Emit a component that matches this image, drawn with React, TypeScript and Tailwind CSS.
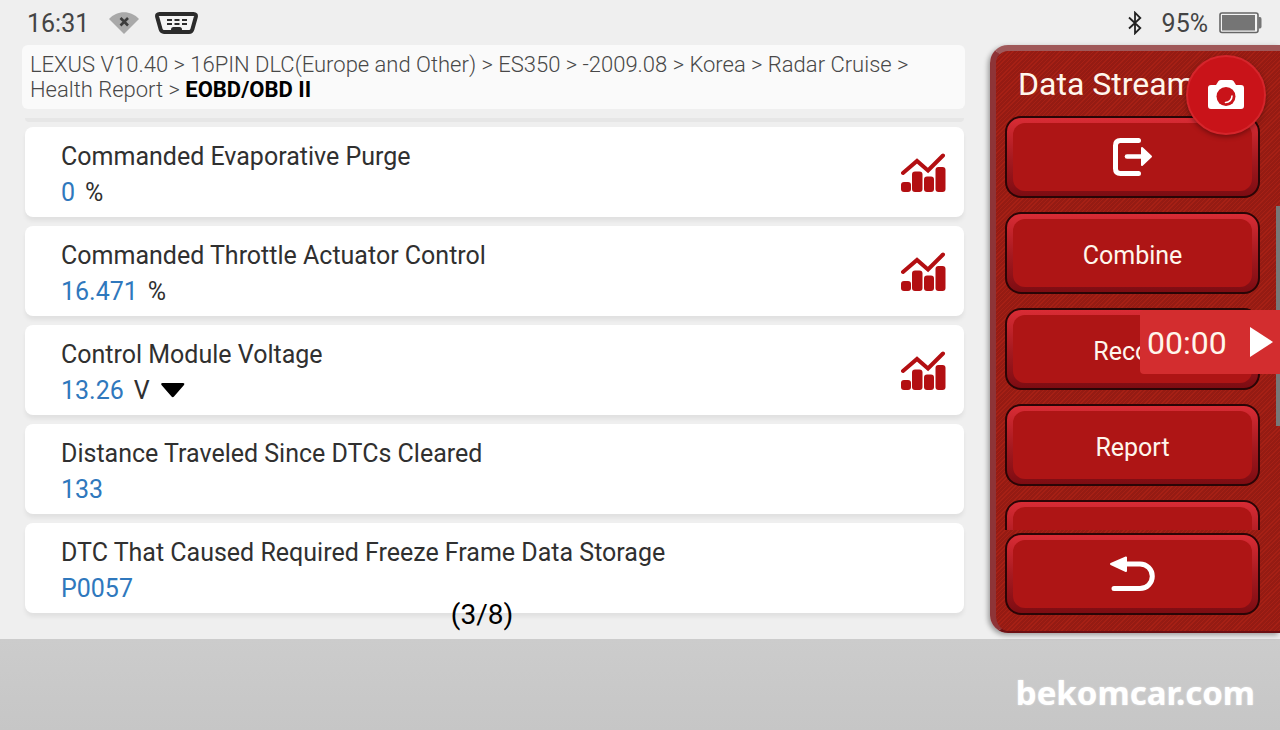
import React from 'react';

interface StreamItem {
  name: string;
  value: string;
  unit?: string;
  chart?: boolean;
  selectable?: boolean;
}

const items: StreamItem[] = [
  { name: 'Commanded Evaporative Purge', value: '0', unit: '%', chart: true },
  { name: 'Commanded Throttle Actuator Control', value: '16.471', unit: '%', chart: true },
  { name: 'Control Module Voltage', value: '13.26', unit: 'V', chart: true, selectable: true },
  { name: 'Distance Traveled Since DTCs Cleared', value: '133' },
  { name: 'DTC That Caused Required Freeze Frame Data Storage', value: 'P0057' },
];

const ChartIcon = () => (
  <svg width="46" height="40" viewBox="0 0 46 40" fill="#b30f12">
    <rect x="0" y="29" width="10" height="10" rx="3" />
    <rect x="11" y="18.5" width="10.5" height="20.5" rx="3" />
    <rect x="23" y="23.5" width="10" height="15.5" rx="3" />
    <rect x="34.5" y="14" width="10" height="25" rx="3" />
    <path d="M2 20 L16 8 L27 17.5 L42 2.5" fill="none" stroke="#b30f12" strokeWidth="4" strokeLinecap="round" />
  </svg>
);

const WifiOffIcon = () => (
  <svg width="30" height="22" viewBox="0 0 30 22">
    <path d="M0 7 C8 -2 22 -2 30 7 L15 22 Z" fill="#a9a9a9" />
    <path d="M11.5 6 L19 13.5 M19 6 L11.5 13.5" stroke="#3c3c3c" strokeWidth="2.6" />
  </svg>
);

const ObdIcon = () => (
  <svg width="43" height="22" viewBox="0 0 43 22">
    <path
      d="M4.5 2 H38.500 Q41.500 2 40.800 5 L37.400 17.300 Q36.600 20 34 20 H9 Q6.400 20 5.600 17.300 L2.200 5 Q1.500 2 4.500 2 Z"
      fill="#f4f4f4"
      stroke="#2b2b2b"
      strokeWidth="4"
    />
    <path d="M16 20 V17.5 Q16 15 18.500 15 H24.500 Q27 15 27 17.500 V20 Z" fill="#2b2b2b" />
    <path d="M12 8 H32 M12 12 H32" stroke="#2b2b2b" strokeWidth="2" strokeDasharray="5 2.5" />
  </svg>
);

const BluetoothIcon = () => (
  <svg width="14" height="24" viewBox="0 0 14 24" fill="none" stroke="#222" strokeWidth="1.8">
    <path d="M1 6.5 L12.3 17 L7 22.3 V1.7 L12.3 7 L1 17.5" />
  </svg>
);

const BatteryIcon = () => (
  <svg width="43" height="22" viewBox="0 0 43 22">
    <rect x="1" y="1" width="38" height="19.5" rx="2" fill="#f4f4f4" stroke="#666" strokeWidth="1.6" />
    <rect x="3" y="3" width="33" height="15.5" fill="#757575" />
    <path d="M39.5 5 H41 Q42.5 5 42.5 7 V14.5 Q42.5 16.5 41 16.5 H39.5 Z" fill="#757575" />
  </svg>
);

const ExitIcon = () => (
  <svg width="40" height="38" viewBox="0 0 40 38">
    <path
      d="M25.5 2.5 H7.5 Q2.5 2.5 2.5 7.5 V30.5 Q2.5 35.5 7.5 35.5 H25.5"
      fill="none"
      stroke="#fff"
      strokeWidth="5"
      strokeLinecap="round"
    />
    <path d="M14 18.5 H30" stroke="#fff" strokeWidth="4.6" strokeLinecap="round" />
    <path d="M29 10 L38 18.5 L29 27 Z" fill="#fff" stroke="#fff" strokeWidth="2" strokeLinejoin="round" />
  </svg>
);

const BackIcon = () => (
  <svg width="48" height="36" viewBox="0 0 48 36">
    <path
      d="M14 8 H31 A12.3 12.3 0 0 1 31 32.6 H5"
      fill="none"
      stroke="#fff"
      strokeWidth="5"
      strokeLinecap="round"
    />
    <path d="M17 1.5 V15 L2 8 Z" fill="#fff" stroke="#fff" strokeWidth="2" strokeLinejoin="round" />
  </svg>
);

const CameraIcon = () => (
  <svg width="38" height="32" viewBox="0 0 38 32">
    <path
      d="M4 6 H9 L11.5 2 Q12.5 1 14 1 H24 Q25.5 1 26.5 2 L29 6 H34 Q37 6 37 9 V27 Q37 30 34 30 H4 Q1 30 1 27 V9 Q1 6 4 6 Z"
      fill="#fff"
    />
    <circle cx="19" cy="17.5" r="9.5" fill="#c91319" />
    <path d="M25 17 A6.5 6.5 0 0 1 18.5 23.5" fill="none" stroke="#fff" strokeWidth="1.6" strokeLinecap="round" />
  </svg>
);

const PanelButton: React.FC<{ label: string; children: React.ReactNode }> = ({ label, children }) => (
  <button
    type="button"
    aria-label={label}
    className="h-[82px] w-full shrink-0 rounded-2xl border-2 border-[#2a0506] bg-linear-to-b from-[#d92c35] via-[#a81a20] to-[#7d0c12] px-[6px] py-[5px] text-[25px] text-[#fff6ec]"
  >
    <span className="flex h-full items-center justify-center rounded-xl bg-[#ae1515]">{children}</span>
  </button>
);

const App: React.FC = () => {
  return (
    <div className="flex min-h-screen flex-col bg-[#efefef] font-['Roboto',sans-serif] text-[#303030]">
      <header className="flex h-[45px] items-center justify-between pl-[27px] pr-[18px] text-[#444]">
        <div className="flex items-center">
          <span className="pt-[3px] text-[25px]">16:31</span>
          <div className="ml-5 flex items-center gap-4">
            <WifiOffIcon />
            <ObdIcon />
          </div>
        </div>
        <div className="flex items-center">
          <BluetoothIcon />
          <span className="ml-5 mr-[11px] pt-[3px] text-[25px]">95%</span>
          <BatteryIcon />
        </div>
      </header>

      <div className="relative flex">
        <main className="relative min-w-0 flex-1 pb-[26px] pl-[22px]">
          <nav className="mr-[-1px] rounded-md bg-[#fafafa] px-2 pb-[7px] pt-[7px] text-[22px] font-light leading-[25px] text-[#484848]">
            LEXUS V10.40 &gt; 16PIN DLC(Europe and Other) &gt; ES350 &gt; -2009.08 &gt; Korea &gt; Radar Cruise &gt;
            Health Report &gt; <strong className="font-bold text-black">EOBD/OBD II</strong>
          </nav>
          <div className="ml-[3px] mt-[9px] h-1 rounded-b-lg bg-[#e6e6e6]"></div>
          <ul className="ml-[3px] mt-[5px] flex flex-col gap-[9px]">
            {items.map((item) => (
              <li
                key={item.name}
                className="flex h-[90px] items-center justify-between rounded-lg bg-white pl-9 pr-[17px] text-[25px] leading-[36px] shadow-[0_4px_4px_rgba(0,0,0,0.06)]"
              >
                <div className="pt-[6px]">
                  <div>{item.name}</div>
                  <div className="flex items-center gap-[10px]">
                    <span className="text-[#2f78bd]">{item.value}</span>
                    {item.unit && <span>{item.unit}</span>}
                    {item.selectable && (
                      <button type="button" aria-label="Change unit">
                        <svg width="26" height="16" viewBox="0 0 26 16">
                          <path d="M2.5 0 H23 Q25 0 24 2 L14 13.5 Q12.8 15 11.5 13.500 L1.500 2 Q0.500 0 2.500 0 Z" />
                        </svg>
                      </button>
                    )}
                  </div>
                </div>
                {item.chart && (
                  <button type="button" aria-label={`${item.name} chart`} className="pt-[2px]">
                    <ChartIcon />
                  </button>
                )}
              </li>
            ))}
          </ul>
          <div className="absolute inset-x-0 bottom-1 text-center text-[28px] leading-[40px] text-black">(3/8)</div>
        </main>

        <aside className="mb-[6px] ml-[26px] flex w-[290px] flex-col rounded-l-[18px] border-l-[6px] border-t-[6px] border-b-2 border-b-[#6d1014] border-l-[#8e3437] border-t-[#a0595a] bg-[repeating-linear-gradient(135deg,#a62015_0_1px,#951b13_1px_3px)] pb-4 pl-[9px] pr-5 shadow-[-2px_2px_5px_rgba(0,0,0,0.35)]">
          <h1 className="flex h-[65px] items-center pl-[13px] text-[32px] text-[#fff6ec]">Data Stream</h1>
          <div className="flex h-0 grow flex-col gap-[14px] overflow-hidden">
            <PanelButton label="Exit">
              <ExitIcon />
            </PanelButton>
            <PanelButton label="Combine">
              <span className="pt-[5px]">Combine</span>
            </PanelButton>
            <PanelButton label="Record">
              <span className="pt-[5px]">Record</span>
            </PanelButton>
            <PanelButton label="Report">
              <span className="pt-[5px]">Report</span>
            </PanelButton>
            <PanelButton label="More">{null}</PanelButton>
          </div>
          <div className="mt-[3px] flex">
            <PanelButton label="Back">
              <BackIcon />
            </PanelButton>
          </div>
        </aside>

        <div className="absolute right-0 top-[161px] h-[220px] w-1 bg-[#777]"></div>
        <button
          type="button"
          aria-label="Take screenshot"
          className="absolute right-[14px] top-[10px] flex size-20 items-center justify-center rounded-full border-2 border-[#d5252b] bg-[#c91319] shadow-[0_2px_5px_rgba(0,0,0,0.35)]"
        >
          <CameraIcon />
        </button>
        <button
          type="button"
          aria-label="Start recording"
          className="absolute right-0 top-[265px] flex h-16 w-[140px] items-center justify-between rounded-l bg-[#d32d2f] pl-[7px] pr-[7px] text-[32px] text-[#fff6ec]"
        >
          <span className="pt-[2px]">00:00</span>
          <svg width="23" height="30" viewBox="0 0 23 30" fill="#fff">
            <path d="M0 0 L23 15 L0 30 Z" />
          </svg>
        </button>
      </div>

      <footer className="flex min-h-[91px] flex-1 items-center justify-end bg-linear-to-b from-[#cccccc] to-[#c6c6c6] pr-[25px] pt-4 font-['Noto_Sans',sans-serif] text-[33px] font-bold text-white">
        <span className="text-shadow-[0_0_2px_rgba(255,255,255,0.6)]">bekomcar.com</span>
      </footer>
    </div>
  );
};

export default App;
